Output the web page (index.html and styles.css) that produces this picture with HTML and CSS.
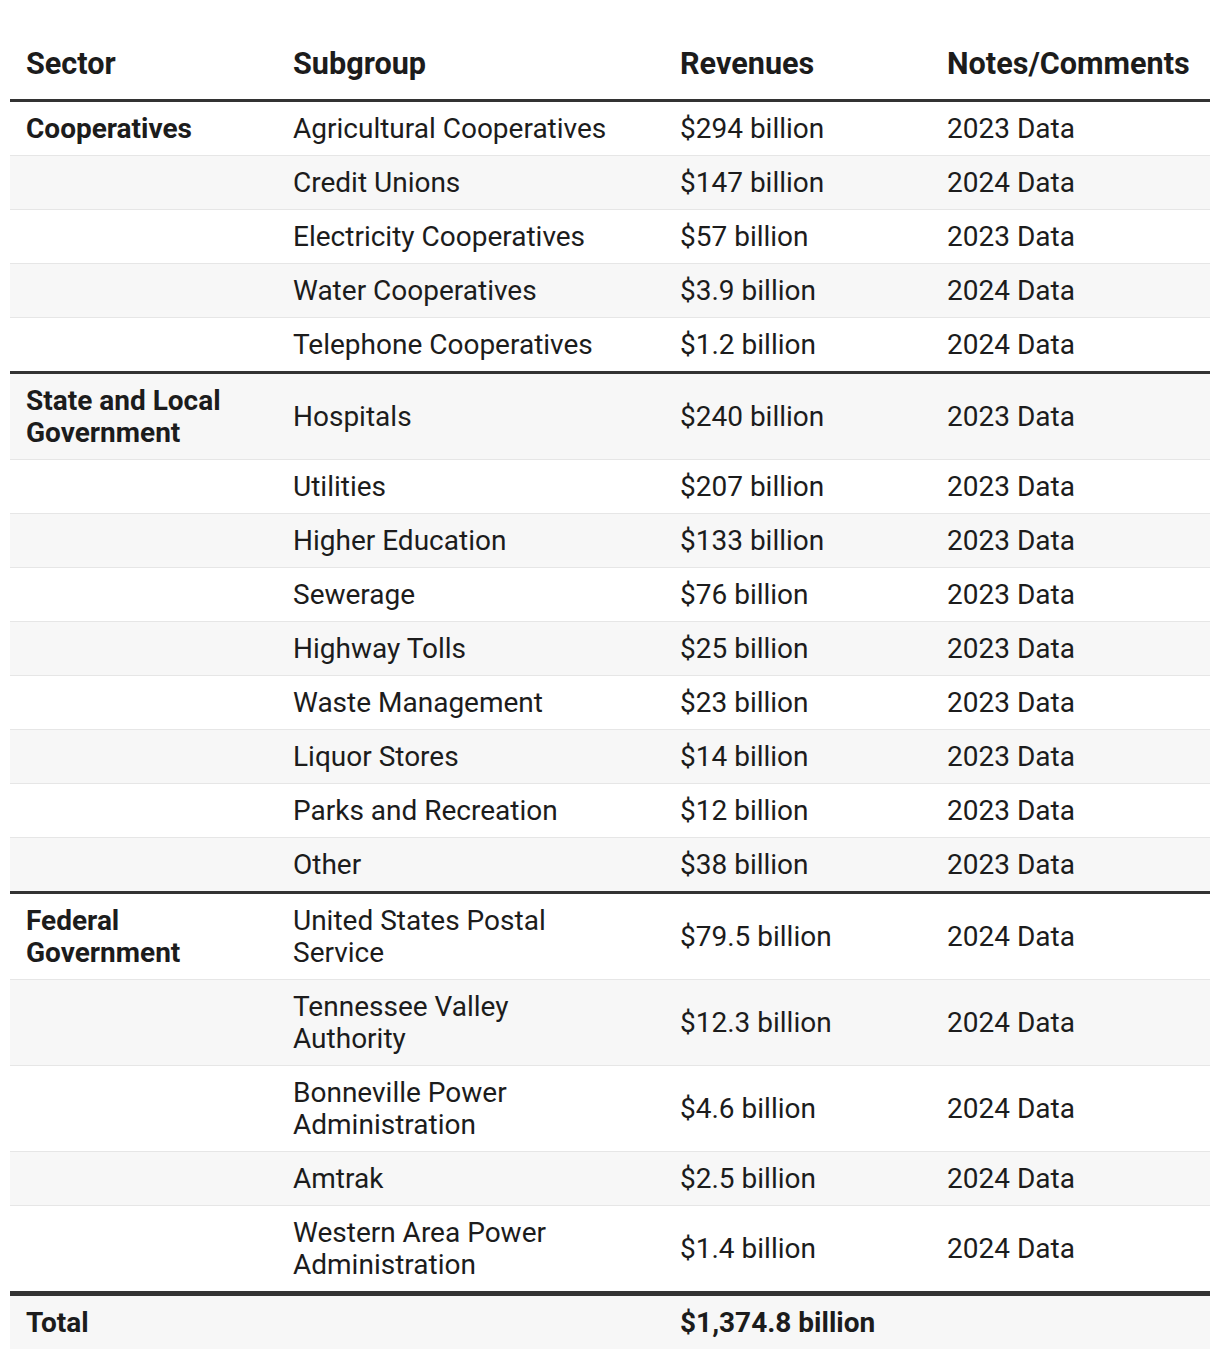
FILE: index.html
```html
<!DOCTYPE html>
<html>
<head>
<meta charset="utf-8">
<link rel="stylesheet" href="styles.css">
</head>
<body>
<div class="wrap">
<table class="rev">
  <colgroup>
    <col class="c1"><col class="c2"><col class="c3"><col class="c4">
  </colgroup>
  <thead>
    <tr><th>Sector</th><th>Subgroup</th><th>Revenues</th><th>Notes/Comments</th></tr>
  </thead>
  <tbody>
    <tr><td class="sec">Cooperatives</td><td class="sub">Agricultural Cooperatives</td><td>$294 billion</td><td>2023 Data</td></tr>
    <tr><td></td><td class="sub">Credit Unions</td><td>$147 billion</td><td>2024 Data</td></tr>
    <tr><td></td><td class="sub">Electricity Cooperatives</td><td>$57 billion</td><td>2023 Data</td></tr>
    <tr><td></td><td class="sub">Water Cooperatives</td><td>$3.9 billion</td><td>2024 Data</td></tr>
    <tr><td></td><td class="sub">Telephone Cooperatives</td><td>$1.2 billion</td><td>2024 Data</td></tr>
    <tr class="grp"><td class="sec">State and Local Government</td><td class="sub">Hospitals</td><td>$240 billion</td><td>2023 Data</td></tr>
    <tr><td></td><td class="sub">Utilities</td><td>$207 billion</td><td>2023 Data</td></tr>
    <tr><td></td><td class="sub">Higher Education</td><td>$133 billion</td><td>2023 Data</td></tr>
    <tr><td></td><td class="sub">Sewerage</td><td>$76 billion</td><td>2023 Data</td></tr>
    <tr><td></td><td class="sub">Highway Tolls</td><td>$25 billion</td><td>2023 Data</td></tr>
    <tr><td></td><td class="sub">Waste Management</td><td>$23 billion</td><td>2023 Data</td></tr>
    <tr><td></td><td class="sub">Liquor Stores</td><td>$14 billion</td><td>2023 Data</td></tr>
    <tr><td></td><td class="sub">Parks and Recreation</td><td>$12 billion</td><td>2023 Data</td></tr>
    <tr><td></td><td class="sub">Other</td><td>$38 billion</td><td>2023 Data</td></tr>
    <tr class="grp"><td class="sec">Federal Government</td><td class="sub">United States Postal Service</td><td>$79.5 billion</td><td>2024 Data</td></tr>
    <tr><td></td><td class="sub">Tennessee Valley Authority</td><td>$12.3 billion</td><td>2024 Data</td></tr>
    <tr><td></td><td class="sub">Bonneville Power Administration</td><td>$4.6 billion</td><td>2024 Data</td></tr>
    <tr><td></td><td class="sub">Amtrak</td><td>$2.5 billion</td><td>2024 Data</td></tr>
    <tr><td></td><td class="sub">Western Area Power Administration</td><td>$1.4 billion</td><td>2024 Data</td></tr>
    <tr class="total"><td class="sec">Total</td><td class="sub"></td><td class="sec">$1,374.8 billion</td><td></td></tr>
  </tbody>
</table>
</div>
</body>
</html>
```
FILE: styles.css
```css
html, body {
  margin: 0;
  padding: 0;
  background: #ffffff;
}
.wrap {
  padding: 10px;
}
.rev {
  width: 1200px;
  border-collapse: collapse;
  table-layout: fixed;
  font-family: Roboto, "Liberation Sans", sans-serif;
  font-size: 28px;
  line-height: 32px;
  color: #1c1c1c;
}
.c1 { width: 267px; }
.c2 { width: 387px; }
.c3 { width: 267px; }
.c4 { width: 279px; }
.rev th {
  text-align: left;
  font-weight: 700;
  font-size: 30.6px;
  padding: 38px 16px 19px;
  border-bottom: 3px solid #333333;
  vertical-align: bottom;
  white-space: nowrap;
}
.rev td {
  padding: 11px 16px 10px;
  border-bottom: 1px solid #e6e6e6;
  vertical-align: middle;
}
.rev td.sub {
  padding-right: 44px;
}
.rev tbody tr:nth-child(even) td {
  background: #f7f7f7;
}
.rev td.sec {
  font-weight: 700;
}
.rev tr.grp td {
  border-top: 3px solid #333333;
}
.rev tr.total td {
  border-top: 5px solid #333333;
  border-bottom: 0;
}
```
